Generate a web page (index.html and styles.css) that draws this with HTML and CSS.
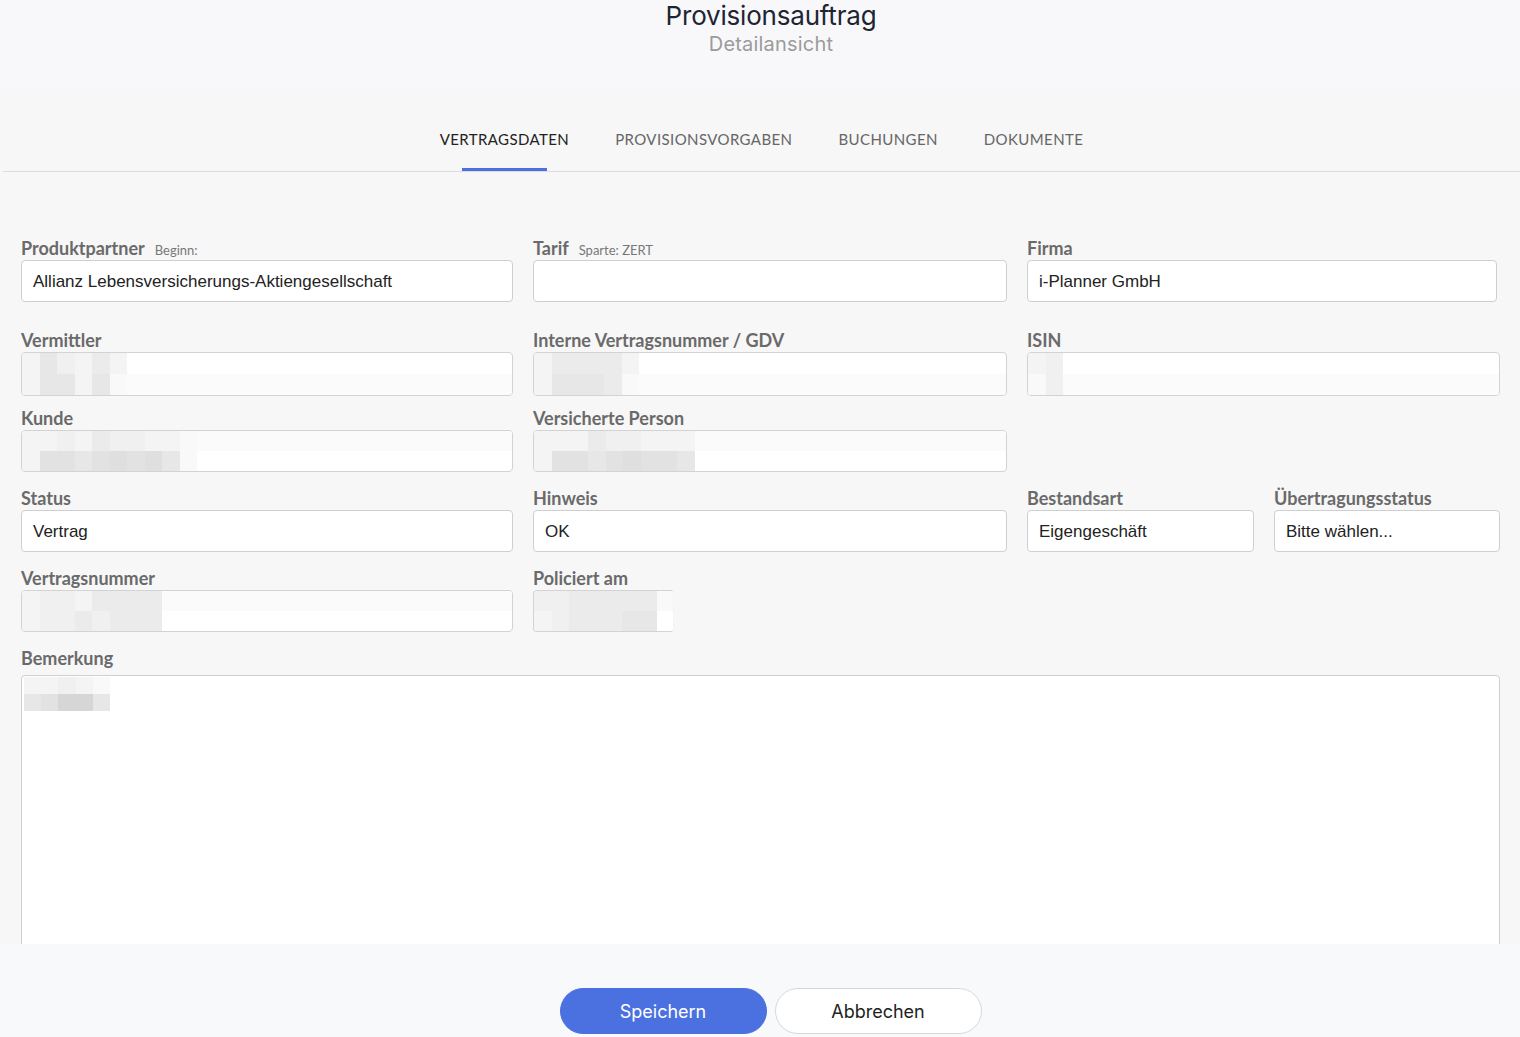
FILE: index.html
```html
<!DOCTYPE html>
<html lang="de">
<head>
<meta charset="utf-8">
<title>Provisionsauftrag – Detailansicht</title>
<link rel="stylesheet" href="styles.css">
</head>
<body>
<div class="app">
  <header class="page-head">
    <h1 class="title">Provisionsauftrag</h1>
    <div class="subtitle">Detailansicht</div>
  </header>

  <nav class="tabs">
    <a class="tab active">Vertragsdaten</a>
    <a class="tab">Provisionsvorgaben</a>
    <a class="tab">Buchungen</a>
    <a class="tab">Dokumente</a>
  </nav>

  <main class="form">
    <div class="row r1">
      <div class="field">
        <label class="lbl">Produktpartner<small>Beginn:</small></label>
        <div class="ctrl">Allianz Lebensversicherungs-Aktiengesellschaft</div>
      </div>
      <div class="field">
        <label class="lbl">Tarif<small>Sparte: ZERT</small></label>
        <div class="ctrl"></div>
      </div>
      <div class="field span2">
        <label class="lbl">Firma</label>
        <div class="ctrl firma">i-Planner GmbH</div>
      </div>
    </div>

    <div class="row r2">
      <div class="field">
        <label class="lbl">Vermittler</label>
        <div class="ctrl masked tall">
          <div class="pxrow"><span class="a"></span><span class="d"></span><span class="b"></span><span class="a"></span><span class="c"></span><span class="a"></span></div>
          <div class="pxrow off"><span class="a"></span><span class="d"></span><span class="d"></span><span class="a"></span><span class="d"></span><span class="h"></span></div>
        </div>
      </div>
      <div class="field">
        <label class="lbl">Interne Vertragsnummer / GDV</label>
        <div class="ctrl masked tall">
          <div class="pxrow"><span class="a"></span><span class="c"></span><span class="c"></span><span class="c"></span><span class="c"></span><span class="a"></span></div>
          <div class="pxrow off"><span class="a"></span><span class="d"></span><span class="d"></span><span class="d"></span><span class="c"></span><span class="h"></span></div>
        </div>
      </div>
      <div class="field span2">
        <label class="lbl">ISIN</label>
        <div class="ctrl masked tall">
          <div class="pxrow"><span class="a"></span><span class="b"></span></div>
          <div class="pxrow off"><span class="h"></span><span class="b"></span></div>
        </div>
      </div>
    </div>

    <div class="row r3">
      <div class="field">
        <label class="lbl">Kunde</label>
        <div class="ctrl masked">
          <div class="pxrow off"><span class="a"></span><span class="a"></span><span class="b"></span><span class="a"></span><span class="c"></span><span class="b"></span><span class="b"></span><span class="a"></span><span class="a"></span><span class="h"></span></div>
          <div class="pxrow"><span class="a"></span><span class="e"></span><span class="e"></span><span class="d"></span><span class="e"></span><span class="f"></span><span class="e"></span><span class="f"></span><span class="d"></span><span class="h"></span></div>
        </div>
      </div>
      <div class="field">
        <label class="lbl">Versicherte Person</label>
        <div class="ctrl masked wide-px">
          <div class="pxrow off"><span class="a"></span><span class="a"></span><span class="a"></span><span class="c"></span><span class="b"></span><span class="b"></span><span class="a"></span><span class="a"></span><span class="a"></span></div>
          <div class="pxrow"><span class="a"></span><span class="e"></span><span class="e"></span><span class="d"></span><span class="e"></span><span class="f"></span><span class="e"></span><span class="e"></span><span class="d"></span></div>
        </div>
      </div>
    </div>

    <div class="row r4">
      <div class="field">
        <label class="lbl">Status</label>
        <div class="ctrl">Vertrag</div>
      </div>
      <div class="field">
        <label class="lbl">Hinweis</label>
        <div class="ctrl">OK</div>
      </div>
      <div class="field">
        <label class="lbl">Bestandsart</label>
        <div class="ctrl">Eigengeschäft</div>
      </div>
      <div class="field">
        <label class="lbl">Übertragungsstatus</label>
        <div class="ctrl">Bitte wählen...</div>
      </div>
    </div>

    <div class="row r5">
      <div class="field">
        <label class="lbl">Vertragsnummer</label>
        <div class="ctrl masked">
          <div class="pxrow off"><span class="a"></span><span class="b"></span><span class="b"></span><span class="a"></span><span class="c"></span><span class="c"></span><span class="c"></span><span class="c"></span></div>
          <div class="pxrow"><span class="a"></span><span class="b"></span><span class="b"></span><span class="c"></span><span class="b"></span><span class="c"></span><span class="c"></span><span class="c"></span></div>
        </div>
      </div>
      <div class="field">
        <label class="lbl">Policiert am</label>
        <div class="ctrl masked short">
          <div class="pxrow off"><span class="b"></span><span class="b"></span><span class="c"></span><span class="c"></span><span class="c"></span><span class="c"></span><span class="c"></span><span class="h"></span></div>
          <div class="pxrow"><span class="a"></span><span class="b"></span><span class="c"></span><span class="c"></span><span class="c"></span><span class="d"></span><span class="d"></span><span class="w"></span></div>
        </div>
      </div>
    </div>

    <div class="row r6">
      <div class="field full">
        <label class="lbl">Bemerkung</label>
        <div class="ctrl area">
          <div class="pxrow sm"><span class="a"></span><span class="a"></span><span class="b"></span><span class="a"></span><span class="h"></span></div>
          <div class="pxrow sm"><span class="d"></span><span class="e"></span><span class="g"></span><span class="g"></span><span class="d"></span></div>
        </div>
      </div>
    </div>
  </main>

  <footer class="foot">
    <button class="btn primary" type="button">Speichern</button>
    <button class="btn secondary" type="button">Abbrechen</button>
  </footer>
</div>
</body>
</html>
```

FILE: styles.css
```css
html, body {
  margin: 0;
  padding: 0;
}

body {
  background: #f7f7f7;
  font-family: Lato, "Liberation Sans", Arial, sans-serif;
}

.app {
  height: 100vh;
  display: flex;
  flex-direction: column;
  overflow: hidden;
}

/* Header */
.page-head {
  flex: none;
  height: 88px;
  box-sizing: border-box;
  padding-left: 22px;
  background: #f8f8fa;
  text-align: center;
}

.title {
  margin: 0;
  font-family: Inter, "Noto Sans", sans-serif;
  font-weight: 400;
  font-size: 26px;
  line-height: 32px;
  letter-spacing: -0.2px;
  color: #1f2433;
}

.subtitle {
  font-family: Inter, "Noto Sans", sans-serif;
  font-size: 20px;
  line-height: 24px;
  color: #9b9b9b;
  letter-spacing: 0.2px;
}

/* Tabs */
.tabs {
  flex: none;
  display: flex;
  justify-content: center;
  margin-left: 3px;
  border-bottom: 1px solid #dcdcdc;
}

.tab {
  position: relative;
  padding: 41px 23px 22px;
  font-family: Lato, sans-serif;
  font-size: 15px;
  line-height: 20px;
  letter-spacing: 0.4px;
  text-transform: uppercase;
  color: #666;
  cursor: pointer;
}

.tab.active {
  color: #222;
}

.tab.active::after {
  content: "";
  position: absolute;
  left: 50%;
  bottom: 0;
  width: 85px;
  margin-left: -42.5px;
  height: 3px;
  background: #4b71e1;
}

/* Form */
.form {
  flex: 1;
  overflow: hidden;
  padding: 0 20px 0 21px;
}

.row {
  display: grid;
  grid-template-columns: 492px 474px 227px 226px;
  column-gap: 20px;
}

.r1 { margin-top: 65px; }
.r2 { margin-top: 27px; }
.r3 { margin-top: 11px; }
.r4 { margin-top: 15px; }
.r5 { margin-top: 15px; }
.r6 { margin-top: 15px; }

.span2 { grid-column: span 2; }
.full { grid-column: 1 / -1; }

.lbl {
  display: block;
  height: 23px;
  font-family: Lato, sans-serif;
  font-weight: 700;
  font-size: 18px;
  line-height: 23px;
  color: #6a6a6a;
  white-space: nowrap;
  overflow: hidden;
}

.lbl small {
  font-size: 13px;
  line-height: 1;
  font-weight: 400;
  color: #777;
  margin-left: 10px;
}

.ctrl {
  height: 42px;
  box-sizing: border-box;
  border: 1px solid #cfcfcf;
  border-radius: 4px;
  background: #fff;
  padding: 1px 11px 0;
  font-family: "Liberation Sans", Arial, sans-serif;
  font-size: 17px;
  line-height: 40px;
  color: #222;
  white-space: nowrap;
  overflow: hidden;
}

.firma {
  margin-right: 3px;
}

.masked {
  padding: 0;
  display: flex;
  flex-direction: column;
  border-color: #d3d3d3;
}

.masked.tall {
  height: 44px;
}

.masked.short {
  width: 141px;
  border-right-color: #f4f4f4;
}

.pxrow {
  display: flex;
  flex: 1;
}

.pxrow.off {
  background: #fbfbfb;
}

.pxrow span {
  flex: none;
  width: 17.5px;
}

.wide-px .pxrow span {
  width: 17.9px;
}

.pxrow.sm {
  flex: none;
  height: 17px;
}

.pxrow.sm span {
  width: 17.2px;
}

.a { background: #f4f4f4; }
.b { background: #f0f0f0; }
.c { background: #ebebeb; }
.d { background: #e7e7e7; }
.e { background: #e2e2e2; }
.f { background: #dfdfdf; }
.g { background: #d6d6d6; }
.h { background: #f9f9f9; }
.w { background: #ffffff; }

.area {
  height: 300px;
  margin-top: 5px;
  padding: 1px 2px;
}

/* Footer */
.foot {
  flex: none;
  height: 93px;
  box-sizing: border-box;
  padding: 44px 0 0 21px;
  background: #f8f9fa;
  display: flex;
  justify-content: center;
  align-items: flex-start;
  gap: 8px;
}

.btn {
  width: 207px;
  height: 46px;
  border-radius: 23px;
  font-family: Inter, "Noto Sans", sans-serif;
  font-size: 18px;
  cursor: pointer;
}

.primary {
  background: #4b71e1;
  color: #fff;
  border: 1px solid #4b71e1;
}

.secondary {
  background: #fff;
  color: #222;
  border: 1px solid #d8d8d8;
}
```
